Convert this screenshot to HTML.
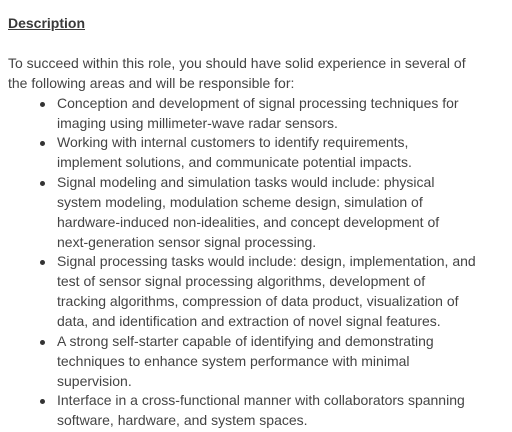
<!DOCTYPE html>
<html><head><style>
html,body{margin:0;padding:0;background:#fff;width:512px;height:432px;overflow:hidden}
body{font-family:"Liberation Sans",sans-serif;font-size:14px;color:#444;line-height:19.85px}
.h{position:absolute;left:8px;top:14px;font-weight:bold;text-decoration:underline;color:#3a3a3a}
.p{position:absolute;left:8px;top:54px;white-space:nowrap}
ul{margin:0;padding:0 0 0 49px;list-style:none}
li{position:relative;white-space:nowrap}
li:before{content:"";position:absolute;left:-17px;top:8px;width:5px;height:5px;border-radius:50%;background:#333}
</style></head><body>
<div class="h">Description</div>
<div class="p">To succeed within this role, you should have solid experience in several of<br>the following areas and will be responsible for:
<ul>
<li>Conception and development of signal processing techniques for<br>imaging using millimeter-wave radar sensors.</li>
<li>Working with internal customers to identify requirements,<br>implement solutions, and communicate potential impacts.</li>
<li>Signal modeling and simulation tasks would include: physical<br>system modeling, modulation scheme design, simulation of<br>hardware-induced non-idealities, and concept development of<br>next-generation sensor signal processing.</li>
<li>Signal processing tasks would include: design, implementation, and<br>test of sensor signal processing algorithms, development of<br>tracking algorithms, compression of data product, visualization of<br>data, and identification and extraction of novel signal features.</li>
<li>A strong self-starter capable of identifying and demonstrating<br>techniques to enhance system performance with minimal<br>supervision.</li>
<li>Interface in a cross-functional manner with collaborators spanning<br>software, hardware, and system spaces.</li>
</ul></div>
</body></html>
